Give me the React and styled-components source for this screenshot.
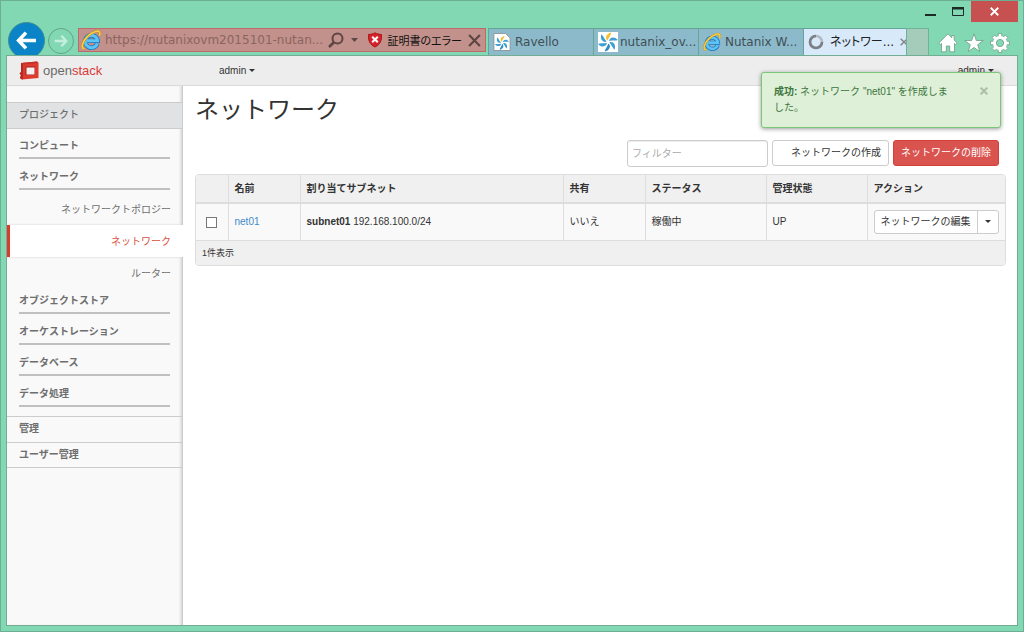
import React from "react";
import styled, { createGlobalStyle } from "styled-components";

const GlobalStyle = createGlobalStyle`
  *, *::before, *::after { box-sizing: border-box; }
  body {
    margin: 0;
    font-family: "Liberation Sans", "Noto Sans CJK JP", sans-serif;
    font-size: 10px;
    line-height: 16px;
    color: #333;
  }
  button, input { font: inherit; color: inherit; margin: 0; padding: 0; }
  button { cursor: pointer; background: none; border: 0; }
  a { text-decoration: none; color: inherit; }
  svg { display: block; flex: none; }
`;

/* ---------- browser window ---------- */

const Window = styled.div`
  min-height: 100vh;
  display: flex;
  flex-direction: column;
  padding: 0 5px 5px;
  background: #83d8b4;
  border: 1px solid #6bb093;
`;

const Caption = styled.div`
  display: flex;
  justify-content: flex-end;
  height: 21px;
`;

const CaptionButton = styled.button`
  width: ${(p) => (p.$close ? 47 : 27)}px;
  height: 21px;
  display: flex;
  align-items: center;
  justify-content: center;
  background: ${(p) => (p.$close ? "#c75050" : "transparent")};
`;

const NavRow = styled.div`
  display: flex;
  height: 33px;
  overflow: hidden;
  padding-left: 2px;
  font-family: "DejaVu Sans", "Noto Sans CJK JP", sans-serif;
  font-size: 12px;
`;

const BackButton = styled.button`
  flex: none;
  width: 37px;
  height: 37px;
  display: flex;
  align-items: center;
  justify-content: center;
  border-radius: 50%;
  background: #0a84c6;
  border: 1px solid #3f8f93;
`;

const ForwardButton = styled.button`
  flex: none;
  width: 26px;
  height: 26px;
  margin: 6px 4px 0 3px;
  display: flex;
  align-items: center;
  justify-content: center;
  border-radius: 50%;
  border: 1px solid #62a388;
`;

const AddressBar = styled.div`
  flex: 1;
  min-width: 0;
  height: 24px;
  margin: 6px 2px 0 0;
  padding: 0 4px 0 2px;
  display: flex;
  align-items: center;
  background: #c3918b;
  border: 1px solid #c0696b;
  color: #111;
`;

const UrlInput = styled.input`
  flex: 1;
  min-width: 0;
  margin-left: 4px;
  border: 0;
  outline: 0;
  background: transparent;
  color: #8a6560;
  font-size: 12px;
`;

const AddressButton = styled.button`
  display: flex;
  align-items: center;
  margin-left: ${(p) => p.$gap || 0}px;
`;

const CertButton = styled.button`
  display: flex;
  align-items: center;
  gap: 5px;
  margin: 0 6px 0 10px;
  font-family: "Noto Sans CJK JP", sans-serif;
  font-size: 11px;
  white-space: nowrap;
  font-feature-settings: "palt";
`;

const Tabs = styled.div`
  display: flex;
  height: 27px;
  margin-top: 6px;
`;

const Tab = styled.button`
  width: ${(p) => (p.$active ? 103 : 105)}px;
  height: 27px;
  padding: 0 5px 0 4px;
  display: flex;
  align-items: center;
  gap: ${(p) => p.$gap || 4}px;
  background: ${(p) => (p.$active ? "#d8e9fa" : "#8dbacb")};
  border: 1px solid #64a596;
  border-width: 1px 0 0 1px;
  color: ${(p) => (p.$active ? "#222" : "#3f4f55")};
  white-space: nowrap;
  text-align: left;
`;

const TabLabel = styled.span`
  flex: 1;
  font-feature-settings: "palt";
`;

const NewTab = styled.button`
  width: 23px;
  height: 27px;
  background: #a5ccba;
  border: 1px solid #6fb397;
  border-bottom: 0;
`;

const Tools = styled.div`
  display: flex;
  gap: 6px;
  padding: 9px 8px 0 9px;
`;

/* ---------- dashboard ---------- */

const Page = styled.div`
  position: relative;
  flex: 1;
  display: flex;
  flex-direction: column;
  background: #fff;
  border: 1px solid #70ad93;
`;

const TopBar = styled.header`
  display: flex;
  align-items: center;
  height: 30px;
  padding: 0 23px 0 12px;
  background: #ededed;
  border-bottom: 1px solid #dadada;
`;

const Brand = styled.a`
  display: flex;
  align-items: center;
  gap: 4px;
  width: 200px;
  font-size: 13px;
  color: #6a6a6a;
`;

const BrandAccent = styled.span`
  color: #da3b3b;
`;

const MenuButton = styled.button`
  display: flex;
  align-items: center;
  gap: 3px;
  margin-left: ${(p) => (p.$end ? "auto" : "0")};
`;

const Caret = styled.span`
  border: 3px solid transparent;
  border-top-color: currentColor;
  border-bottom: 0;
`;

const Columns = styled.div`
  flex: 1;
  display: flex;
`;

const Sidebar = styled.nav`
  flex: none;
  width: 176px;
  padding-top: 16px;
  background: #f9f9f9;
  border-right: 1px solid #ccc;
  box-shadow: inset -3px 0 3px -2px #ccc;
  color: #6e6e6e;
`;

const Section = styled.a`
  display: block;
  height: ${(p) => (p.$open ? 27 : 26)}px;
  padding: 4px 12px;
  border-top: 1px solid #ccc;
  border-bottom: ${(p) => (p.$open || p.$last ? "1px solid #ccc" : "0")};
  background: ${(p) => (p.$open ? "#e1e2e4" : "transparent")};
  font-weight: ${(p) => (p.$open ? 500 : 700)};
`;

const Panels = styled.div`
  display: flex;
  flex-direction: column;
  padding-top: 8px;
`;

const Panel = styled.a`
  display: block;
  height: 22px;
  padding-top: 1px;
  margin: 0 12px ${(p) => (p.$open ? 3 : 9)}px;
  border-bottom: 2px solid #bfc1c1;
  font-weight: 700;
`;

const PanelList = styled.div`
  margin-bottom: 3px;
  text-align: right;
`;

const PanelLink = styled.a`
  display: block;
  height: 32px;
  padding: 9px 12px 7px 0;
  margin-right: -1px;
  ${(p) =>
    p.$active &&
    `
    background: #fff;
    color: #d9503f;
    border-left: 3px solid #dc3a2b;
    box-shadow: 0 0 2px #ccc;
    clip-path: inset(-2px 0 -2px 0);
  `}
`;

const Main = styled.main`
  flex: 1;
  min-width: 0;
  padding: 8px 11px 0 12px;
`;

const Title = styled.h1`
  margin: 0;
  font-size: 24px;
  line-height: 32px;
  font-weight: 400;
`;

const Toolbar = styled.div`
  display: flex;
  justify-content: flex-end;
  align-items: flex-start;
  gap: 4px;
  padding: 14px 7px 7px 0;
`;

const FilterInput = styled.input`
  width: 141px;
  height: 27px;
  padding: 0 4px;
  border: 1px solid #ccc;
  border-radius: 3px;
  box-shadow: inset 0 1px 1px #eee;
  background: #fff;
  &::placeholder { color: #aaa; opacity: 1; }
`;

const Button = styled.button`
  height: 26px;
  padding: 0 7px 0 ${(p) => (p.$danger ? 7 : 18)}px;
  border: 1px solid ${(p) => (p.$danger ? "#d43f3a" : "#ccc")};
  border-radius: 3px;
  background: ${(p) => (p.$danger ? "#d9534f" : "#fff")};
  color: ${(p) => (p.$danger ? "#fff" : "#333")};
`;

const TableFrame = styled.div`
  border: 1px solid #ddd;
  border-radius: 4px;
  overflow: hidden;
`;

const Table = styled.table`
  width: 100%;
  table-layout: fixed;
  border-collapse: collapse;
`;

const Col = styled.col`
  width: ${(p) => (p.$w ? `${p.$w}px` : "auto")};
`;

const HeadCell = styled.th`
  height: 28px;
  padding: 0 6px;
  text-align: left;
  font-weight: 700;
  background: #f0f0f0;
  border-bottom: 2px solid #ddd;
  & + & { border-left: 1px solid #ddd; }
`;

const Cell = styled.td`
  height: 37px;
  padding: 0 6px;
  background: #f9f9f9;
  & + & { border-left: 1px solid #ddd; }
`;

const FootCell = styled.td`
  height: 25px;
  padding: 0 6px;
  background: #f0f0f0;
  border-top: 1px solid #ddd;
  font-size: 9px;
`;

const Checkbox = styled.input`
  display: block;
  appearance: none;
  width: 11px;
  height: 11px;
  margin: 2px auto 0;
  border: 1px solid #777;
  background: #fff;
`;

const TextLink = styled.a`
  color: #428bca;
`;

const SplitButton = styled.div`
  display: flex;
  width: 125px;
  height: 24px;
  border: 1px solid #ccc;
  border-radius: 3px;
  background: #fff;
`;

const SplitMain = styled.button`
  flex: 1;
  border-right: 1px solid #ccc;
`;

const SplitToggle = styled.button`
  width: 20px;
  display: flex;
  align-items: center;
  justify-content: center;
`;

const Alert = styled.div`
  position: absolute;
  top: 16px;
  right: 16px;
  width: 240px;
  height: 56px;
  padding: 11px 11px 0 12px;
  display: flex;
  align-items: flex-start;
  justify-content: space-between;
  background: #dff0d8;
  border: 1px solid #7cc67c;
  border-radius: 3px;
  box-shadow: 0 1px 4px rgba(0, 0, 0, 0.4);
  color: #3c763d;
`;

const AlertText = styled.p`
  width: 182px;
  margin: 0;
`;

const AlertClose = styled.button`
  display: flex;
  padding: 3px 1px;
`;

/* ---------- icons ---------- */

const IeIcon = ({ size = 20 }) => (
  <svg width={size} height={size} viewBox="0 0 20 20" aria-hidden="true">
    <path d="M16.300 13.500A6.200 6.200 0 1 1 16.600 10.800H6" fill="none" stroke="#1b76bd" strokeWidth="4.600" />
    <path d="M16.300 13.500A6.200 6.200 0 1 1 16.600 10.800H6" fill="none" stroke="#5dc4f5" strokeWidth="3" />
    <path d="M3.600 18.800C-.4 18.600.8 12 6.500 6.400 12 1.200 18.600-.6 18.900 3.200c0 .8-.2 1.600-.6 2.400" fill="none" stroke="#b9851a" strokeWidth="2.400" />
    <path d="M3.600 18.800C-.4 18.600.8 12 6.500 6.400 12 1.200 18.600-.6 18.900 3.200c0 .8-.2 1.600-.6 2.400" fill="none" stroke="#f8cf42" strokeWidth="1.600" />
  </svg>
);

const PETALS = ["#f8bd2c", "#3d9fd2", "#3d9fd2", "#2b8cc2", "#3d9fd2", "#3d9fd2"];

const Pinwheel = ({ size = 18, page }) => (
  <svg width={size} height={size} viewBox="0 0 20 20" aria-hidden="true">
    {page ? (
      <path d="M1 .5h13l5 5v14H1z" fill="#fff" stroke="#8a8f92" />
    ) : (
      <path d="M0 0h20v20H0z" fill="#fff" />
    )}
    <g transform={page ? "translate(10 11) scale(.8)" : "translate(10 10)"}>
      {PETALS.map((c, i) => (
        <path key={i} d="M-.3-1.500C-3-4-1.500-8.500 4-9.300 3.600-7.200 1.600-5.500-.3-1.500z" fill={c} transform={`rotate(${i * 60 - 4})`} />
      ))}
    </g>
  </svg>
);

const ArrowIcon = ({ size, color, flip, weight }) => (
  <svg width={size} height={size} viewBox="0 0 20 20" aria-hidden="true">
    <path
      d="M19 10H3M9.500 2.500 2.500 10l7 7.500"
      fill="none"
      stroke={color}
      strokeWidth={weight}
      transform={flip ? "rotate(180 10 10)" : undefined}
    />
  </svg>
);

const CrossIcon = ({ size, color, weight = 2 }) => (
  <svg width={size} height={size} viewBox="0 0 12 12" aria-hidden="true">
    <path d="M1 1l10 10M11 1 1 11" stroke={color} strokeWidth={weight} fill="none" />
  </svg>
);

const ShieldIcon = () => (
  <svg width="14" height="16" viewBox="0 0 14 16" aria-hidden="true">
    <path d="M7 .8C9 2 11 2.300 13.500 2.500c.3 6-1 9.700-6.500 12.500C1.500 12.200.2 8.500.5 2.500 3 2.300 5 2 7 .8z" fill="#d8202a" stroke="#a8141c" />
    <path d="M4.200 4.700l5.600 5.600M9.800 4.700l-5.600 5.600" stroke="#fff" strokeWidth="2" />
  </svg>
);

const SearchIcon = () => (
  <svg width="16" height="16" viewBox="0 0 16 16" aria-hidden="true">
    <circle cx="9.500" cy="6.500" r="5" fill="none" stroke="#5d4643" strokeWidth="2" />
    <path d="M6 10.200 1 15" stroke="#5d4643" strokeWidth="2.600" />
  </svg>
);

const SpinnerIcon = () => (
  <svg width="16" height="16" viewBox="0 0 16 16" aria-hidden="true">
    <circle cx="8" cy="8" r="6" fill="none" stroke="#b4bac2" strokeWidth="2.600" />
    <path d="M8 2a6 6 0 1 0 6 6" fill="none" stroke="#7c8086" strokeWidth="2.600" />
  </svg>
);

const HomeIcon = () => (
  <svg width="20" height="20" viewBox="0 0 20 20" aria-hidden="true">
    <path d="M10 .8 .8 10l1.500 1.500 1.200-1v8.300h4.800V13h3.400v5.800h4.800v-8.300l1.200 1 1.500-1.500-3-3V2.500h-2.400v2.300z" fill="#fff" stroke="#6d9c88" strokeWidth=".8" />
  </svg>
);

const StarIcon = () => (
  <svg width="20" height="20" viewBox="0 0 20 20" aria-hidden="true">
    <path d="M10 .8l2.300 6.700h7l-5.600 4.200 2.100 6.900L10 14.500l-5.800 4.100 2.100-6.900L.7 7.500h7z" fill="#fff" stroke="#6d9c88" strokeWidth=".8" />
  </svg>
);

const GearIcon = () => (
  <svg width="20" height="20" viewBox="0 0 20 20" aria-hidden="true">
    <g fill="#fff" stroke="#6d9c88" strokeWidth=".8">
      {[0, 45, 90, 135].map((a) => (
        <path key={a} d="M8.200.6h3.600v18.800H8.200z" transform={`rotate(${a} 10 10)`} />
      ))}
    </g>
    <circle cx="10" cy="10" r="5.300" fill="none" stroke="#fff" strokeWidth="3.400" />
    <circle cx="10" cy="10" r="3.600" fill="#83d8b4" stroke="#6d9c88" strokeWidth=".8" />
  </svg>
);

const OpenStackMark = () => (
  <svg width="20" height="19" viewBox="0 0 20 19" aria-hidden="true">
    <path d="M2 2 18 .5l1.500 1.500v15L3 18.500 1 17l1-3-1.500-1.500L2 11z" fill="#dd3b2d" />
    <path d="M2 2 4 3.500V18l-1 .5L1 17l1-3-1.500-1.500L2 11z" fill="#b22a21" />
    <path d="M2 2 18 .5l1.500 1.500L4 3.500z" fill="#c23127" />
    <path d="M6.500 5.500h9.500v8.500H6.500z" fill="#a3241c" />
    <path d="M7.500 6.500h8v7h-8z" fill="#f6efef" />
  </svg>
);

/* ---------- page ---------- */

const NETWORKS = [
  { name: "net01", subnet: "subnet01", cidr: "192.168.100.0/24", shared: "いいえ", status: "稼働中", admin: "UP" },
];

export default function App() {
  return (
    <Window>
      <GlobalStyle />
      <Caption>
        <CaptionButton aria-label="最小化">
          <svg width="11" height="9" viewBox="0 0 11 9"><path d="M0 7h11v2H0z" fill="#1c2b25" /></svg>
        </CaptionButton>
        <CaptionButton aria-label="最大化">
          <svg width="12" height="9" viewBox="0 0 12 9"><path d="M.5 1h11v7.500H.5zM0 1.500h12" fill="none" stroke="#1c2b25" /><path d="M0 0h12v2.500H0z" fill="#1c2b25" /></svg>
        </CaptionButton>
        <CaptionButton $close aria-label="閉じる">
          <CrossIcon size={9} color="#fff" weight={2.4} />
        </CaptionButton>
      </Caption>
      <NavRow>
        <BackButton aria-label="戻る"><ArrowIcon size={21} color="#fff" weight={3.4} /></BackButton>
        <ForwardButton aria-label="進む"><ArrowIcon size={14} color="#c4eedd" weight={3.4} flip /></ForwardButton>
        <AddressBar>
          <IeIcon />
          <UrlInput aria-label="アドレス" readOnly value="https://nutanixovm2015101-nutan..." />
          <AddressButton aria-label="検索"><SearchIcon /></AddressButton>
          <AddressButton aria-label="履歴" $gap={7}>
            <svg width="7" height="4" viewBox="0 0 7 4"><path d="M0 0h7L3.500 4z" fill="#5d4643" /></svg>
          </AddressButton>
          <CertButton><ShieldIcon />証明書のエラー</CertButton>
          <AddressButton aria-label="中止"><CrossIcon size={13} color="#5d4643" /></AddressButton>
        </AddressBar>
        <Tabs role="tablist">
          <Tab role="tab"><Pinwheel page /><TabLabel>Ravello</TabLabel></Tab>
          <Tab role="tab" $gap={2}><Pinwheel size={20} /><TabLabel>nutanix_ov...</TabLabel></Tab>
          <Tab role="tab"><IeIcon size={18} /><TabLabel>Nutanix W...</TabLabel></Tab>
          <Tab role="tab" $active aria-selected="true" $gap={6}>
            <SpinnerIcon /><TabLabel>ネットワー...</TabLabel><CrossIcon size={8} color="#7b8288" />
          </Tab>
          <NewTab aria-label="新しいタブ" />
        </Tabs>
        <Tools>
          <button aria-label="ホーム"><HomeIcon /></button>
          <button aria-label="お気に入り"><StarIcon /></button>
          <button aria-label="設定"><GearIcon /></button>
        </Tools>
      </NavRow>

      <Page>
        <TopBar>
          <Brand href="#home"><OpenStackMark /><span>open<BrandAccent>stack</BrandAccent></span></Brand>
          <MenuButton>admin<Caret /></MenuButton>
          <MenuButton $end>admin<Caret /></MenuButton>
        </TopBar>
        <Columns>
          <Sidebar>
            <Section href="#project" $open>プロジェクト</Section>
            <Panels>
              <Panel href="#compute">コンピュート</Panel>
              <Panel href="#network" $open>ネットワーク</Panel>
              <PanelList>
                <PanelLink href="#topology">ネットワークトポロジー</PanelLink>
                <PanelLink href="#networks" $active>ネットワーク</PanelLink>
                <PanelLink href="#routers">ルーター</PanelLink>
              </PanelList>
              <Panel href="#object-store">オブジェクトストア</Panel>
              <Panel href="#orchestration">オーケストレーション</Panel>
              <Panel href="#database">データベース</Panel>
              <Panel href="#data-processing">データ処理</Panel>
            </Panels>
            <Section href="#admin">管理</Section>
            <Section href="#identity" $last>ユーザー管理</Section>
          </Sidebar>
          <Main>
            <Title>ネットワーク</Title>
            <Toolbar>
              <FilterInput aria-label="フィルター" placeholder="フィルター" />
              <Button>ネットワークの作成</Button>
              <Button $danger>ネットワークの削除</Button>
            </Toolbar>
            <TableFrame>
              <Table>
                <colgroup>
                  <Col $w={32} /><Col $w={72} /><Col /><Col $w={82} /><Col $w={121} /><Col $w={101} /><Col $w={138} />
                </colgroup>
                <thead>
                  <tr>
                    <HeadCell aria-label="選択" />
                    <HeadCell>名前</HeadCell>
                    <HeadCell>割り当てサブネット</HeadCell>
                    <HeadCell>共有</HeadCell>
                    <HeadCell>ステータス</HeadCell>
                    <HeadCell>管理状態</HeadCell>
                    <HeadCell>アクション</HeadCell>
                  </tr>
                </thead>
                <tbody>
                  {NETWORKS.map((n) => (
                    <tr key={n.name}>
                      <Cell><Checkbox type="checkbox" aria-label={n.name} /></Cell>
                      <Cell><TextLink href="#net01">{n.name}</TextLink></Cell>
                      <Cell><strong>{n.subnet}</strong> {n.cidr}</Cell>
                      <Cell>{n.shared}</Cell>
                      <Cell>{n.status}</Cell>
                      <Cell>{n.admin}</Cell>
                      <Cell>
                        <SplitButton>
                          <SplitMain>ネットワークの編集</SplitMain>
                          <SplitToggle aria-label="その他の操作"><Caret /></SplitToggle>
                        </SplitButton>
                      </Cell>
                    </tr>
                  ))}
                </tbody>
                <tfoot>
                  <tr><FootCell colSpan={7}>1件表示</FootCell></tr>
                </tfoot>
              </Table>
            </TableFrame>
          </Main>
        </Columns>
        <Alert role="status">
          <AlertText><strong>成功:</strong> ネットワーク "net01" を作成しました。</AlertText>
          <AlertClose aria-label="閉じる"><CrossIcon size={8} color="#aebfa9" weight={3} /></AlertClose>
        </Alert>
      </Page>
    </Window>
  );
}
